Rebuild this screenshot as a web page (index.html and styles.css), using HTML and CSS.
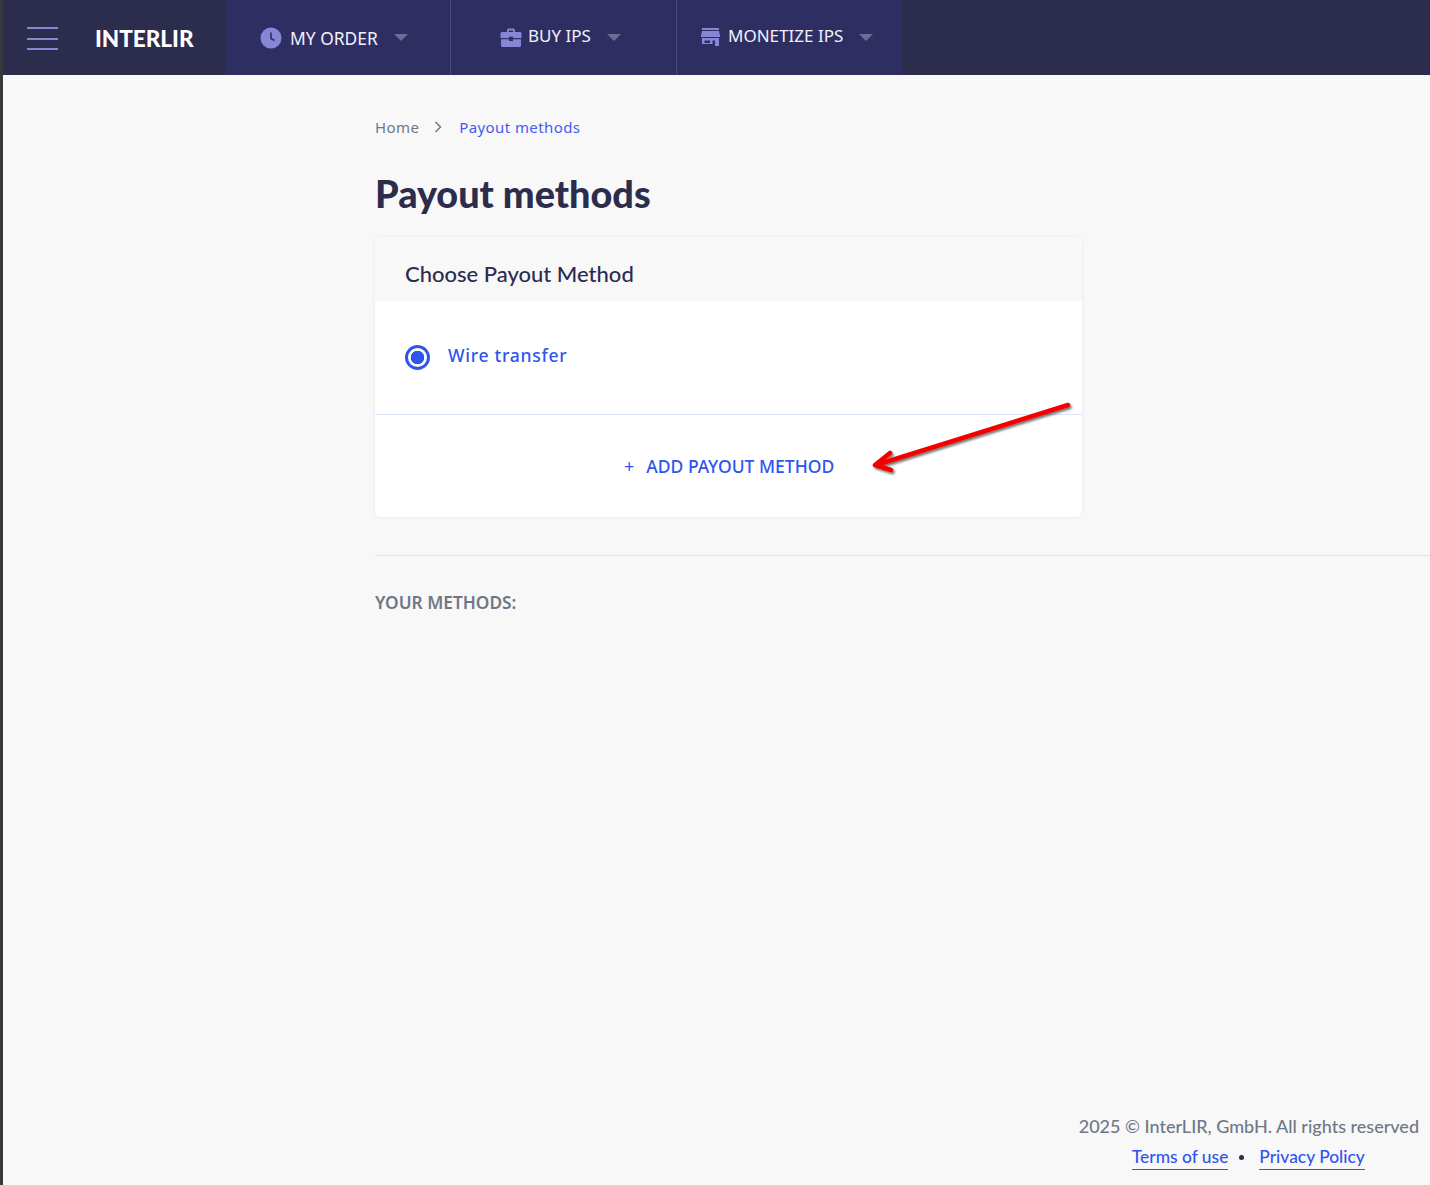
FILE: index.html
```html
<!DOCTYPE html>
<html lang="en">
<head>
<meta charset="utf-8">
<title>Payout methods</title>
<link rel="stylesheet" href="styles.css">
</head>
<body>
<div class="app">
  <header class="topbar">
    <div class="brand">
      <button class="burger" aria-label="Menu"><span></span><span></span><span></span></button>
      <span class="logo">INTERLIR</span>
    </div>
    <nav class="nav">
      <a class="nav-item nav-order">
        <svg class="nav-icon" width="22" height="22" viewBox="0 0 22 22"><circle cx="11" cy="11" r="10.5" fill="#8785d6"/><path d="M11 5.5V11.5L14.5 13.5" fill="none" stroke="#2f2e63" stroke-width="1.6"/></svg>
        <span>MY ORDER</span><i class="caret"></i>
      </a>
      <a class="nav-item nav-buy">
        <svg class="nav-icon" width="22" height="20" viewBox="0 0 22 20"><path d="M7 4V2.2C7 1.3 7.7.6 8.6.6h4.8c.9 0 1.6.7 1.6 1.6V4h-1.800V2.400H8.800V4z" fill="#8785d6"/><path d="M2 4h18c.8 0 1.500.7 1.500 1.500V10H13V8.800H9V10H.5V5.500C.5 4.700 1.200 4 2 4z" fill="#8785d6"/><path d="M1 11.300h8v1.700h4v-1.700h8v6.200c0 .9-.7 1.600-1.600 1.600H2.600c-.9 0-1.600-.7-1.600-1.600z" fill="#8785d6"/></svg>
        <span>BUY IPS</span><i class="caret"></i>
      </a>
      <a class="nav-item nav-sell">
        <svg class="nav-icon" width="19" height="18" viewBox="0 0 19 18"><path d="M1 0h17v2H1z" fill="#8785d6"/><path d="M1 3h17l1 4.500v1.500H0V7.500z" fill="#8785d6"/><path fill-rule="evenodd" d="M1 10h17v8h-4v-5.500h-2.500V16H1zM3.500 12.500V15h5.500v-2.500z" fill="#8785d6"/></svg>
        <span>MONETIZE IPS</span><i class="caret"></i>
      </a>
    </nav>
  </header>

  <main class="main">
    <div class="crumbs">
      <a class="crumb">Home</a>
      <svg class="crumb-sep" width="8" height="12" viewBox="0 0 8 12"><path d="M1.500 1L6.500 6L1.500 11" fill="none" stroke="#6f7787" stroke-width="1.500"/></svg>
      <a class="crumb crumb-current">Payout methods</a>
    </div>
    <h1 class="title">Payout methods</h1>

    <section class="card">
      <h2 class="card-head">Choose Payout Method</h2>
      <div class="option">
        <span class="radio"></span>
        <span class="option-label">Wire transfer</span>
      </div>
      <div class="add-row">
        <span class="add-plus">+</span>
        <span class="add-label">ADD PAYOUT METHOD</span>
      </div>
      <svg class="arrow" width="210" height="80" viewBox="0 0 210 80">
        <defs><filter id="sh" x="-10%" y="-30%" width="120%" height="170%"><feDropShadow dx="1.500" dy="2" stdDeviation="1.200" flood-color="#000" flood-opacity=".55"/></filter></defs>
        <path d="M198 5L6 65M20 53L5 65L21 70" fill="none" stroke="#f40404" stroke-width="4.500" stroke-linecap="round" stroke-linejoin="round" filter="url(#sh)"/>
      </svg>
    </section>

    <hr class="rule">
    <h3 class="methods">YOUR METHODS:</h3>

    <footer class="footer">
      <p class="copy">2025 © InterLIR, GmbH. All rights reserved</p>
      <p class="links"><a class="flink">Terms of use</a><i class="dot"></i><a class="flink">Privacy Policy</a></p>
    </footer>
  </main>
</div>
</body>
</html>
```

FILE: styles.css
```css
* { box-sizing: border-box; }
html, body { margin: 0; height: 100%; }
body {
  background: #f8f8f8;
  font-family: "Noto Sans", "Open Sans", sans-serif;
  color: #2c2c4d;
}
.app {
  height: 1185px;
  display: flex;
  flex-direction: column;
  border-left: 3px solid #3a3a3c;
  overflow: hidden;
}
.topbar {
  height: 75px;
  flex: none;
  display: flex;
  background: #2c2c4d;
}
.brand {
  width: 222px;
  display: flex;
  align-items: center;
  padding-left: 24px;
}
.burger {
  width: 31px;
  height: 23px;
  padding: 0;
  border: 0;
  background: none;
  display: flex;
  flex-direction: column;
  justify-content: space-between;
  margin-right: 37px;
  margin-top: 2px;
}
.burger span { display: block; height: 2px; background: #8785d6; }
.logo {
  font-family: "Lato", sans-serif;
  font-weight: 900;
  font-size: 22.5px;
  color: #fff;
  margin-top: 1px;
}
.nav { display: flex; background: #2f2e63; }
.nav-item {
  width: 226px;
  display: flex;
  align-items: center;
  color: #f1f1fb;
  font-size: 17px;
  border-right: 1px solid #4a4a78;
  white-space: nowrap;
}
.nav-item:last-child { border-right: 0; width: 225px; }
.nav-order { padding-left: 35px; font-size: 17.4px; }
.nav-buy { padding-left: 49px; padding-bottom: 5px; }
.nav-sell { padding-left: 24px; padding-bottom: 5px; }
.nav-icon { flex: none; }
.nav-order .nav-icon { margin-right: 8px; }
.nav-buy .nav-icon { margin-right: 6px; margin-top: 5px; }
.nav-sell .nav-icon { margin-right: 8px; margin-top: 4px; }
.caret {
  width: 0;
  height: 0;
  margin-left: 16px;
  border-left: 7px solid transparent;
  border-right: 7px solid transparent;
  border-top: 7px solid #6d6c94;
}
.nav-buy .caret, .nav-sell .caret { margin-top: 4px; }
.main {
  flex: 1;
  position: relative;
  padding-left: 372px;
  display: flex;
  flex-direction: column;
}
.crumbs {
  display: flex;
  align-items: center;
  margin-top: 41px;
  height: 22px;
  font-size: 15px;
  letter-spacing: .4px;
}
.crumb { color: #6f7787; }
.crumb-sep { margin: 0 17px 0 15px; }
.crumb-current { color: #3f5ef0; }
.title {
  margin: 31px 0 0;
  height: 50px;
  font-family: "Lato", sans-serif;
  font-weight: 900;
  font-size: 37.8px;
  line-height: 50px;
  color: #2c2c4d;
}
.card {
  position: relative;
  width: 707px;
  margin-top: 18px;
  background: #fff;
  border-radius: 6px;
  box-shadow: 0 0 4px rgba(40, 40, 80, .07);
}
.card-head {
  margin: 0;
  height: 64px;
  padding: 0 30px;
  background: #f8f8f8;
  border-radius: 6px 6px 0 0;
  font-family: "Lato", sans-serif;
  font-weight: 500;
  font-size: 22px;
  line-height: 73px;
  color: #2c2c4d;
}
.option {
  height: 114px;
  display: flex;
  align-items: center;
  padding: 0 30px 4px;
  border-bottom: 1px solid #dde5fa;
}
.radio {
  width: 25px;
  height: 25px;
  flex: none;
  border: 3px solid #2f55f0;
  border-radius: 50%;
  background: radial-gradient(circle, #2f55f0 0 6.500px, #fff 7px);
  margin-right: 18px;
  margin-top: 3px;
}
.option-label {
  color: #2f55f0;
  font-weight: 500;
  font-size: 17.6px;
  letter-spacing: .7px;
  margin-bottom: 2px;
}
.add-row {
  height: 102px;
  display: flex;
  align-items: center;
  padding-left: 249px;
  padding-bottom: 1px;
  color: #2f55f0;
}
.add-plus { font-size: 18px; margin-right: 12px; }
.add-label { font-size: 17.5px; font-weight: 500; white-space: nowrap; }
.arrow {
  position: absolute;
  left: 495px;
  top: 163px;
  pointer-events: none;
}
.rule {
  margin: 38px 0 0;
  border: 0;
  border-top: 1px solid #e1e3e8;
}
.methods {
  margin: 35px 0 0;
  font-size: 17.3px;
  line-height: 24px;
  font-weight: 600;
  color: #6f7787;
}
.footer {
  position: absolute;
  right: 11px;
  bottom: 15px;
  font-family: "Lato", sans-serif;
  font-size: 18px;
  text-align: center;
}
.copy { margin: 0 0 0 1px; color: #6f7787; line-height: 24px; font-weight: 500; }
.links {
  margin: 7px 0 0;
  display: flex;
  justify-content: center;
  align-items: center;
  font-size: 17.4px;
  line-height: 24px;
  font-weight: 500;
}
.flink { color: #2f55f0; border-bottom: 1px solid #2f55f0; }
.dot {
  width: 5px;
  height: 5px;
  border-radius: 50%;
  background: #2c2c4d;
  margin: 0 15px 0 11px;
}
```
